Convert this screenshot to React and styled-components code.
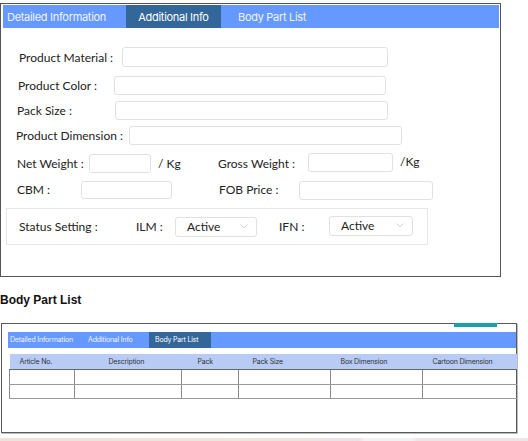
import styled, { createGlobalStyle } from 'styled-components';

const GlobalStyle = createGlobalStyle`
  html, body {
    margin: 0;
    padding: 0;
    background: #ffffff;
  }
  body {
    font-family: Lato, "Noto Sans", sans-serif;
    color: #222222;
  }
  * {
    box-sizing: border-box;
  }
`;

const Page = styled.div`
  width: 528px;
  height: 441px;
  display: flex;
  flex-direction: column;
  overflow: hidden;
`;

const Panel = styled.section`
  margin-top: 3px;
  width: 501px;
  height: 275px;
  border: 1px solid #555555;
  padding: 1px 1px 0 2px;
  display: flex;
  flex-direction: column;
`;

const TabBar = styled.div`
  height: ${(p) => (p.$small ? 16 : 23)}px;
  background: #6699ff;
  display: flex;
  align-items: stretch;
`;

const Tab = styled.div`
  width: ${(p) => p.$w}px;
  padding-left: ${(p) => p.$pl}px;
  display: flex;
  align-items: center;
  justify-content: ${(p) => (p.$center ? 'center' : 'flex-start')};
  font-family: Inter, "Noto Sans", sans-serif;
  font-size: ${(p) => (p.$small ? 7 : 11)}px;
  letter-spacing: ${(p) => (p.$small ? -0.2 : -0.3)}px;
  color: ${(p) => (p.$active ? '#ffffff' : '#eef3ff')};
  background: ${(p) => (p.$active ? '#336699' : 'transparent')};
  white-space: nowrap;
`;

const Form = styled.div`
  display: flex;
  flex-direction: column;
`;

const Row = styled.div`
  display: flex;
  align-items: center;
  margin-top: ${(p) => p.$mt}px;
  padding-left: ${(p) => p.$pl}px;
`;

const Label = styled.span`
  width: ${(p) => p.$w}px;
  flex-shrink: 0;
  font-size: 12px;
  color: #222222;
  white-space: nowrap;
`;

const Input = styled.input`
  width: ${(p) => p.$w}px;
  height: ${(p) => p.$h || 19}px;
  flex-shrink: 0;
  border: 1px solid #e1e1e1;
  border-radius: 3px;
  background: #ffffff;
  margin: 0;
  padding: 0 6px;
  outline: none;
  position: relative;
  top: ${(p) => p.$dy || 0}px;
`;

const Unit = styled.span`
  width: ${(p) => p.$w}px;
  margin-left: 7px;
  flex-shrink: 0;
  font-size: 12px;
  color: #222222;
  position: relative;
  top: ${(p) => p.$dy || 0}px;
`;

const Spacer = styled.div`
  width: ${(p) => p.$w}px;
  flex-shrink: 0;
`;

const StatusBox = styled.div`
  margin-top: 9px;
  margin-left: 3px;
  width: 422px;
  height: 37px;
  border: 1px solid #e6e6e6;
  display: flex;
  align-items: center;
  padding-left: 12px;
`;

const Select = styled.div`
  width: ${(p) => p.$w}px;
  height: 20px;
  flex-shrink: 0;
  border: 1px solid #e1e1e1;
  border-radius: 3px;
  display: flex;
  align-items: center;
  justify-content: space-between;
  padding: 0 8px 0 11px;
  font-size: 12px;
  color: #222222;
  position: relative;
  top: ${(p) => p.$dy || 0}px;
`;

const Chevron = () => (
  <svg width="8" height="5" viewBox="0 0 8 5" fill="none">
    <path d="M0.5 0.5 L4 4 L7.5 0.5" stroke="#c8c8c8" strokeWidth="0.8" />
  </svg>
);

const Heading = styled.h2`
  margin: 16px 0 0 0;
  font-family: "Liberation Sans", Arial, sans-serif;
  font-size: 12px;
  line-height: 14px;
  font-weight: bold;
  color: #111111;
`;

const ListPanel = styled.section`
  position: relative;
  margin: 16px 0 0 1px;
  width: 516px;
  height: 111px;
  border: 1px solid #5a5a5a;
  box-shadow: 1px 1px 0 #bdbdbd;
  padding: 8px 0 0 6px;
`;

const TealMark = styled.div`
  position: absolute;
  top: -1px;
  right: 19px;
  width: 43px;
  height: 4px;
  background: #1c9fa8;
`;

const Table = styled.table`
  margin: 6px 0 0 1px;
  width: 507px;
  border-collapse: collapse;
  table-layout: fixed;
  font-family: Inter, "Noto Sans", sans-serif;
`;

const Th = styled.th`
  height: 16px;
  padding: 0 0 0 ${(p) => p.$pl}px;
  text-align: left;
  font-size: 7px;
  font-weight: 400;
  letter-spacing: -0.2px;
  color: #333333;
  background: #b7cbf5;
  white-space: nowrap;
  border-bottom: 1px solid #666666;
`;

const Td = styled.td`
  height: 14.5px;
  padding: 0;
  border-left: 1px solid #8a8a8a;
  border-bottom: 1px solid #999999;
`;

const Strip = styled.div`
  margin-top: 5px;
  height: 3px;
  background: linear-gradient(
    to right,
    #efe2db 0%,
    #efe6dc 45%,
    #ece2e6 68%,
    #f4f1f3 69%,
    #f4f1f3 78%,
    #efe5e6 79%,
    #efe5e6 100%
  );
`;

const columns = [
  { title: 'Article No.', w: 65, pl: 10 },
  { title: 'Description', w: 107, pl: 34 },
  { title: 'Pack', w: 57, pl: 16 },
  { title: 'Pack Size', w: 92, pl: 14 },
  { title: 'Box Dimension', w: 92, pl: 10 },
  { title: 'Cartoon Dimension', w: 94, pl: 10 },
];

const App = () => {
  return (
    <Page>
      <GlobalStyle />
      <Panel>
        <TabBar>
          <Tab $w={123} $pl={4}>Detailed Information</Tab>
          <Tab $w={95} $pl={0} $center $active>Additional Info</Tab>
          <Tab $w={120} $pl={17}>Body Part List</Tab>
        </TabBar>
        <Form>
          <Row $mt={19} $pl={16}>
            <Label $w={103}>Product Material :</Label>
            <Input $w={266} $h={20} />
          </Row>
          <Row $mt={9} $pl={15}>
            <Label $w={96}>Product Color :</Label>
            <Input $w={272} />
          </Row>
          <Row $mt={6} $pl={14}>
            <Label $w={98}>Pack Size :</Label>
            <Input $w={273} />
          </Row>
          <Row $mt={6} $pl={13}>
            <Label $w={113}>Product Dimension :</Label>
            <Input $w={273} />
          </Row>
          <Row $mt={9} $pl={14}>
            <Label $w={72}>Net Weight :</Label>
            <Input $w={62} />
            <Unit $w={60}>/ Kg</Unit>
            <Label $w={90}>Gross Weight :</Label>
            <Input $w={85} $dy={-1} />
            <Unit $w={30} $dy={-2}>/Kg</Unit>
          </Row>
          <Row $mt={7} $pl={14}>
            <Label $w={64}>CBM :</Label>
            <Input $w={91} $h={18} />
            <Spacer $w={47} />
            <Label $w={80}>FOB Price :</Label>
            <Input $w={134} $dy={1} />
          </Row>
          <StatusBox>
            <Label $w={117}>Status Setting :</Label>
            <Label $w={39}>ILM :</Label>
            <Select $w={82}>
              Active
              <Chevron />
            </Select>
            <Spacer $w={22} />
            <Label $w={50}>IFN :</Label>
            <Select $w={84} $dy={-1}>
              Active
              <Chevron />
            </Select>
          </StatusBox>
        </Form>
      </Panel>

      <Heading>Body Part List</Heading>

      <ListPanel>
        <TealMark />
        <TabBar $small>
          <Tab $small $w={80} $pl={2}>Detailed Information</Tab>
          <Tab $small $w={61} $pl={0}>Additional Info</Tab>
          <Tab $small $w={62} $pl={6} $active>Body Part List</Tab>
        </TabBar>
        <Table>
          <colgroup>
            {columns.map((c) => (
              <col key={c.title} style={{ width: c.w }} />
            ))}
          </colgroup>
          <thead>
            <tr>
              {columns.map((c) => (
                <Th key={c.title} $pl={c.pl}>
                  {c.title}
                </Th>
              ))}
            </tr>
          </thead>
          <tbody>
            {[0, 1].map((r) => (
              <tr key={r}>
                {columns.map((c) => (
                  <Td key={c.title} />
                ))}
              </tr>
            ))}
          </tbody>
        </Table>
      </ListPanel>
      <Strip />
    </Page>
  );
};

export default App;
